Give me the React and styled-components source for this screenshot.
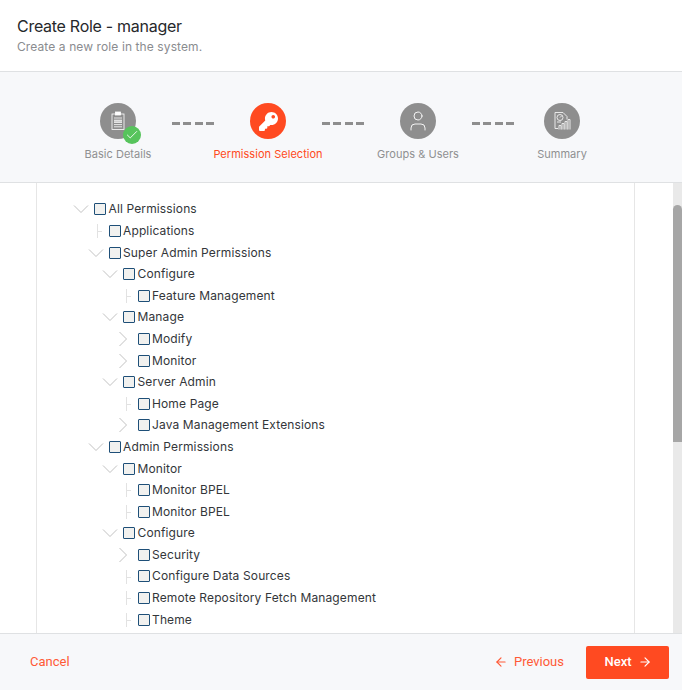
import React from "react";
import styled, { createGlobalStyle } from "styled-components";
import { ArrowLeft, ArrowRight, User, Check } from "lucide-react";
import { FaKey } from "react-icons/fa";

const Global = createGlobalStyle`
  html, body { margin: 0; padding: 0; background: #fff; }
  body { font-family: Inter, "Liberation Sans", sans-serif; }
  * { box-sizing: border-box; }
`;

const Dialog = styled.div`
  width: 682px; height: 690px; display: flex; flex-direction: column; overflow: hidden; background: #fff;
`;
const Header = styled.header`
  height: 72px; flex: none; padding: 17px 17px 0; border-bottom: 1px solid #dfe1e3;
`;
const Title = styled.h1`
  margin: 0; font-size: 16px; line-height: 18px; font-weight: 400; color: #26282b; letter-spacing: -0.28px;
`;
const Subtitle = styled.p`
  margin: 4px 0 0; font-size: 12px; line-height: 16px; color: #8a8c8f; letter-spacing: 0.1px;
`;
const Stepper = styled.div`
  height: 111px; flex: none; background: #f7f8fa; border-bottom: 1px solid #dfe1e3;
  display: grid; grid-template-columns: 150px 150px 150px 138px; padding: 31px 0 0 43px; align-content: start;
`;
const Step = styled.div`
  display: flex; flex-direction: column; align-items: center; position: relative;
`;
const Circle = styled.div`
  width: 36px; height: 36px; border-radius: 50%; position: relative;
  background: ${p => (p.$active ? "#ff4a21" : "#8e8e8e")};
  color: #fff; display: flex; align-items: center; justify-content: center;
`;
const Badge = styled.div`
  position: absolute; right: -5px; bottom: -5px; width: 18px; height: 18px; border-radius: 50%;
  background: #57c45c; display: flex; align-items: center; justify-content: center; color: #fff;
`;
const StepLabel = styled.div`
  margin-top: 7px; font-size: 11px; line-height: 16px; white-space: nowrap; letter-spacing: 0.03px;
  color: ${p => (p.$active ? "#ff4a21" : "#8f9091")};
`;
const Dashes = styled.div`
  position: absolute; left: 129px; top: 19px; width: 42px; height: 3px;
  background: repeating-linear-gradient(to right, #8e8e8e 0 8px, transparent 8px 11.3px);
`;
const ScrollArea = styled.div`
  flex: 1; min-height: 0; display: flex; overflow: hidden;
`;
const Panel = styled.div`
  flex: none; width: 599px; margin-left: 36px; border-left: 1px solid #e6e6e6; border-right: 1px solid #e6e6e6;
  padding: 15.6px 0 0 36px; overflow: hidden;
`;
const Spacer = styled.div`flex: 1;`;
const Track = styled.div`
  width: 9px; flex: none; background: #e9e9e9; padding-top: 22px;
`;
const Thumb = styled.div`
  height: 237px; background: #a6a6a6; border-radius: 5px 5px 0 0;
`;
const Row = styled.div`
  height: 21.6px; display: flex; align-items: center; position: relative;
  padding-left: ${p => p.$level * 14.5}px;
`;
const Toggle = styled.span`
  width: 21px; height: 21.6px; flex: none; display: flex; align-items: center; justify-content: flex-start; color: #c2c2c2;
  position: relative;
`;
const Connector = styled.span`
  position: absolute; left: 9px; top: 4px; height: 14px; width: 5px;
  border-left: 1px solid #e2e2e2;
  &::after { content: ""; position: absolute; left: 0; top: 7px; width: 4px; border-top: 1px solid #e2e2e2; }
`;
const Box = styled.span`
  width: 12px; height: 12px; flex: none; border: 1px solid #1e4f78; background: #f1f1ef; border-radius: 1px;
`;
const Label = styled.span`
  margin-left: 2.5px; font-size: 12px; line-height: 16px; color: #33363a; white-space: nowrap; letter-spacing: 0.13px;
`;
const Footer = styled.footer`
  height: 57px; flex: none; background: #f7f8fa; border-top: 1px solid #dfe1e3;
  display: flex; align-items: center; justify-content: space-between; padding: 0 13px 0 30px;
`;
const TextButton = styled.button`
  border: 0; background: none; padding: 0 0 1px; font: 400 13px Roboto, sans-serif; color: #ff5a36;
  display: inline-flex; align-items: center; gap: 6px;
`;
const Actions = styled.div`display: flex; align-items: center; gap: 22px;`;
const NextButton = styled.button`
  width: 83px; height: 33px; border: 0; border-radius: 2px; background: #ff4a21; color: #fff; padding: 0 0 1px 1px;
  font: 500 13px Roboto, sans-serif; display: inline-flex; align-items: center; justify-content: center; gap: 6px;
`;

const Chevron = ({ open }) => (
  <svg width="16" height="16" viewBox="0 0 16 16" fill="none" stroke="currentColor" strokeWidth="1">
    {open ? <path d="M1 4.5 L8 11.5 L15 4.5" /> : <path d="M2.5 1 L9.5 8 L2.5 15" />}
  </svg>
);

const Clipboard = () => (
  <svg width="18" height="20" viewBox="0 0 18 20" fill="none" stroke="#fff" strokeWidth="0.8">
    <rect x="3" y="3" width="12" height="15.5" />
    <rect x="6.5" y="1" width="5" height="3" fill="#fff" />
    <path d="M5 7h8M5 9.2h8M5 11.4h8M5 13.6h8M5 15.8h8" />
    <rect x="5" y="9.2" width="8" height="2.2" fill="#fff" stroke="none" opacity=".55" />
  </svg>
);

const Summary = () => (
  <svg width="20" height="20" viewBox="0 0 20 20" fill="none" stroke="#e8e8e8" strokeWidth="1">
    <path d="M3 1.5h8l4 4v3M3 1.5v16h3" />
    <circle cx="8" cy="6.5" r="3" />
    <path d="M8 6.5l2-2M5 11h4" />
    <path d="M7 18.5v-4h2v4M10 18.5v-6h2v6M13 18.5v-8h2v8M16 18.5v-10h2v10" />
  </svg>
);

const tree = [
  [0, "open", "All Permissions"],
  [1, "leaf", "Applications"],
  [1, "open", "Super Admin Permissions"],
  [2, "open", "Configure"],
  [3, "leaf", "Feature Management"],
  [2, "open", "Manage"],
  [3, "closed", "Modify"],
  [3, "closed", "Monitor"],
  [2, "open", "Server Admin"],
  [3, "leaf", "Home Page"],
  [3, "closed", "Java Management Extensions"],
  [1, "open", "Admin Permissions"],
  [2, "open", "Monitor"],
  [3, "leaf", "Monitor BPEL"],
  [3, "leaf", "Monitor BPEL"],
  [2, "open", "Configure"],
  [3, "closed", "Security"],
  [3, "leaf", "Configure Data Sources"],
  [3, "leaf", "Remote Repository Fetch Management"],
  [3, "leaf", "Theme"],
];

export default function App() {
  return (
    <Dialog>
      <Global />
      <Header>
        <Title>Create Role - manager</Title>
        <Subtitle>Create a new role in the system.</Subtitle>
      </Header>
      <Stepper>
        <Step>
          <Circle><Clipboard /><Badge><Check size={14} strokeWidth={1.5} /></Badge></Circle>
          <StepLabel>Basic Details</StepLabel>
          <Dashes />
        </Step>
        <Step>
          <Circle $active><FaKey size={19} /></Circle>
          <StepLabel $active>Permission Selection</StepLabel>
          <Dashes />
        </Step>
        <Step>
          <Circle><User size={24} strokeWidth={0.9} /></Circle>
          <StepLabel>Groups &amp; Users</StepLabel>
          <Dashes />
        </Step>
        <Step>
          <Circle><Summary /></Circle>
          <StepLabel>Summary</StepLabel>
        </Step>
      </Stepper>
      <ScrollArea>
        <Panel>
          {tree.map(([level, kind, text], i) => (
            <Row key={i} $level={level}>
              <Toggle>
                {kind === "open" && <Chevron open />}
                {kind === "closed" && <Chevron />}
                {kind === "leaf" && <Connector />}
              </Toggle>
              <Box />
              <Label>{text}</Label>
            </Row>
          ))}
        </Panel>
        <Spacer />
        <Track><Thumb /></Track>
      </ScrollArea>
      <Footer>
        <TextButton>Cancel</TextButton>
        <Actions>
          <TextButton><ArrowLeft size={14} />Previous</TextButton>
          <NextButton>Next<ArrowRight size={14} /></NextButton>
        </Actions>
      </Footer>
    </Dialog>
  );
}
